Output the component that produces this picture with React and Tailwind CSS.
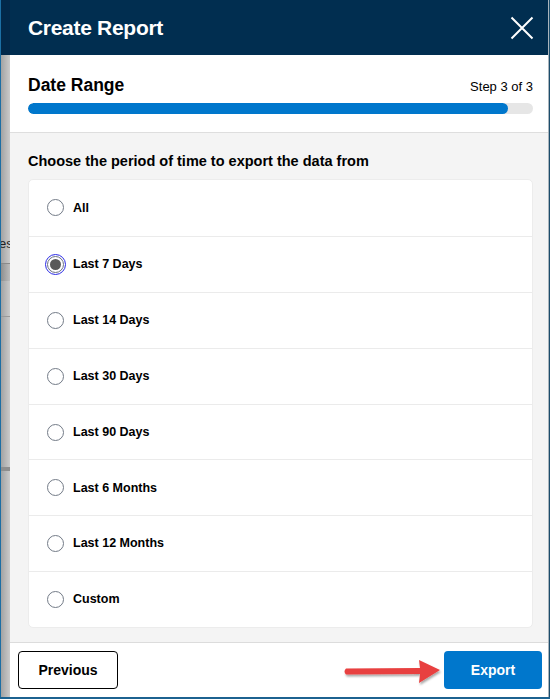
import { useState } from "react";

const OPTIONS = [
  "All",
  "Last 7 Days",
  "Last 14 Days",
  "Last 30 Days",
  "Last 90 Days",
  "Last 6 Months",
  "Last 12 Months",
  "Custom",
];

function Radio({ checked }) {
  if (checked) {
    return (
      <span className="w-[21px] h-[21px] rounded-full border-[1.5px] border-[#2a2ae6] flex items-center justify-center">
        <span className="w-[17px] h-[17px] rounded-full border border-[#6b7280] bg-white flex items-center justify-center">
          <span className="w-[11px] h-[11px] rounded-full bg-[#595959]" />
        </span>
      </span>
    );
  }
  return (
    <span className="w-[21px] h-[21px] flex items-center justify-center">
      <span className="w-[17px] h-[17px] rounded-full border border-[#737b87] bg-white" />
    </span>
  );
}

export default function App() {
  const [selected, setSelected] = useState("Last 7 Days");

  return (
    <div
      className="w-[550px] h-[699px] flex flex-col bg-white relative overflow-hidden"
      style={{ fontFamily: '"Liberation Sans", Arial, sans-serif' }}
    >
      <div className="flex flex-1 min-h-0">
        {/* page behind the modal */}
        <div className="w-[10px] shrink-0 flex flex-col border-l border-[#1c6ea4] overflow-hidden">
          <div className="h-[55px] shrink-0 bg-[#02284a]" />
          <div className="flex-1 bg-gradient-to-r from-[#a3a3a3] to-[#cbcbcb] flex flex-col">
            <div className="h-[180px] shrink-0" />
            <div className="h-[18px] shrink-0 text-[13px] leading-[18px] text-[#222] whitespace-nowrap -ml-[2px]">
              es
            </div>
            <div className="h-[10px] shrink-0" />
            <div className="h-[18px] shrink-0 bg-gradient-to-r from-[#8f8f8f] to-[#bdbdbd] border-t border-[#8a8a8a]" />
            <div className="h-[36px] shrink-0 border-b border-[#9a9a9a]" />
            <div className="h-[150px] shrink-0" />
            <div className="h-[4px] shrink-0 bg-[#8e8e8e]" />
          </div>
        </div>

        {/* modal */}
        <div className="flex-1 flex flex-col min-w-0">
          <div className="h-[55px] shrink-0 bg-[#012e50] flex items-center justify-between pl-[18px] pr-[15px]">
            <h1 className="text-white text-[21px] tracking-[-0.3px] font-bold">
              Create Report
            </h1>
            <svg width="24" height="24" viewBox="0 0 24 24" className="mr-[-1px]">
              <path d="M1.5 1.5 L22.5 22.5 M22.5 1.5 L1.5 22.5" stroke="white" strokeWidth="2" fill="none" />
            </svg>
          </div>

          <div className="h-[78px] shrink-0 bg-white pl-[18px] pr-[15px] pt-[19px] border-b border-[#dedede]">
            <div className="flex items-end justify-between">
              <h2 className="text-[17.5px] font-bold text-black leading-[22px]">Date Range</h2>
              <span className="text-[13px] text-black leading-[19px]">Step 3 of 3</span>
            </div>
            <div className="mt-[7px] h-[11px] rounded-full bg-[#e6e6e6] overflow-hidden">
              <div className="h-full w-[95%] rounded-full bg-[#0077cc]" />
            </div>
          </div>

          <div className="flex-1 min-h-0 bg-[#f4f4f4] pl-[18px] pr-[15px] pt-[18px] pb-[14px] flex flex-col">
            <p className="text-[14.5px] font-bold text-black leading-[20px] mb-[8px]">
              Choose the period of time to export the data from
            </p>
            <div className="bg-white rounded-[5px] border border-[#ececec] flex flex-col">
              {OPTIONS.map((opt, i) => (
                <label
                  key={opt}
                  onClick={() => setSelected(opt)}
                  className={`h-[55.9px] shrink-0 flex items-center pl-[16px] gap-[7px] cursor-pointer ${
                    i > 0 ? "border-t border-[#ebebeb]" : ""
                  }`}
                >
                  <Radio checked={selected === opt} />
                  <span className="text-[12.5px] font-bold text-black">{opt}</span>
                </label>
              ))}
            </div>
          </div>

          <div className="h-[55px] shrink-0 bg-white border-t border-[#dcdcdc] flex items-center justify-between pl-[8px] pr-[6px]">
            <button className="w-[100px] h-[38px] rounded-[4px] border border-black bg-white text-[14px] font-bold text-black">
              Previous
            </button>
            <button className="w-[98px] h-[38px] rounded-[4px] bg-[#0077cc] text-[14px] font-bold text-white">
              Export
            </button>
          </div>
        </div>

        <div className="w-[2px] shrink-0 flex">
          <div className="w-[1px] bg-[#a9b4bc]" />
          <div className="w-[1px] bg-[#1c4d6c]" />
        </div>
      </div>
      <div className="h-[2px] shrink-0 bg-[#1c6290]" />

      {/* annotation arrow */}
      <svg
        className="absolute left-[340px] top-[656px] pointer-events-none"
        width="104"
        height="32"
        viewBox="0 0 104 32"
      >
        <defs>
          <filter id="sh" x="-10%" y="-30%" width="120%" height="160%">
            <feDropShadow dx="1" dy="2" stdDeviation="1.2" floodColor="#000" floodOpacity="0.35" />
          </filter>
        </defs>
        <g filter="url(#sh)">
          <path
            d="M6 12.5 L80 12 L79 4 L100 14 L79 27 L80 18 L6 18.5 Q3 15.5 6 12.5 Z"
            fill="#e8403f"
          />
        </g>
      </svg>
    </div>
  );
}
